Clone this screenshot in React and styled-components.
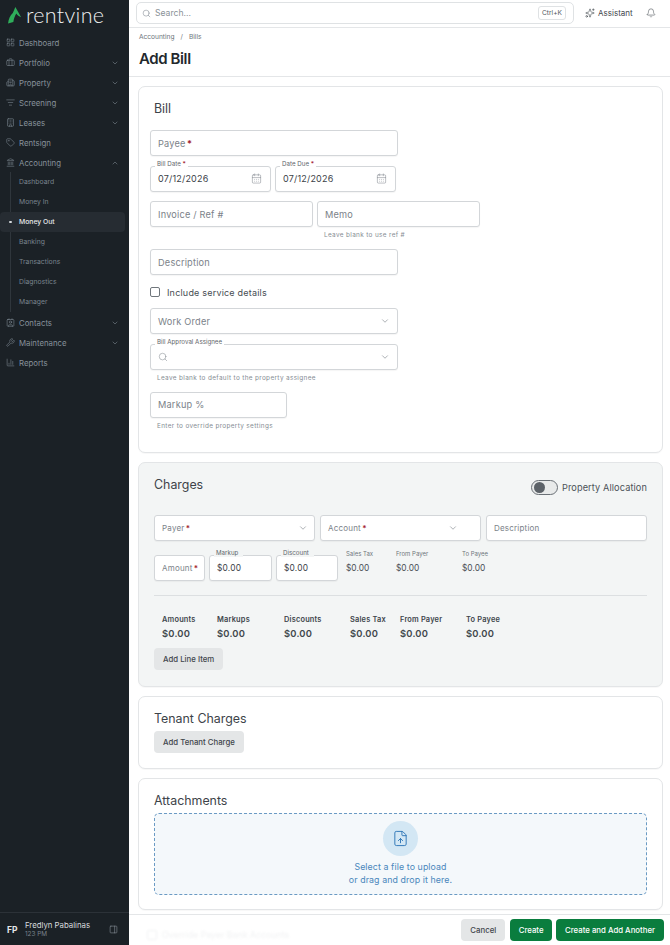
import React from 'react';
import styled, { createGlobalStyle } from 'styled-components';
import {
	LayoutGrid, Briefcase, Building2, ListFilter, Building, Tag, Landmark, Contact, Wrench,
	ChartColumn, ChevronDown, ChevronUp, Search, Bell, CalendarDays, FileUp, PanelRight, Sparkles
} from 'lucide-react';

const GlobalStyle = createGlobalStyle`
	* { box-sizing: border-box; }
	html, body { margin: 0; height: 100%; }
	body {
		font-family: Inter, "Liberation Sans", sans-serif;
		background: #fff;
		overflow: hidden;
	}
`;

const Shell = styled.div`
	display: grid;
	grid-template-columns: 129px 541px;
	width: 670px;
	height: 945px;
	overflow: hidden;
`;

/* sidebar */
const Sidebar = styled.aside`
	display: flex;
	flex-direction: column;
	background: #1b2126;
	height: 945px;
`;

const Brand = styled.div`
	display: flex;
	align-items: center;
	gap: 4px;
	height: 32.5px;
	padding: 0 0 3px 7px;
	color: #eef0f1;
	font-family: Lato, sans-serif;
	font-size: 21.5px;
	font-weight: 300;
	letter-spacing: 0.3px;
`;

const Nav = styled.nav`
	display: flex;
	flex-direction: column;
	flex: 1;
`;

const NavItem = styled.div`
	display: flex;
	align-items: center;
	height: 20px;
	padding: 0 10px 0 6px;
	color: #87919b;
	font-size: 7.8px;
	gap: 4px;
	span { flex: 1; }
`;

const SubNav = styled.div`
	position: relative;
	display: flex;
	flex-direction: column;
	margin: -1px 0 1px;
	&::before {
		content: '';
		position: absolute;
		left: 10px;
		top: 0;
		bottom: 0;
		width: 1px;
		background: #2f363c;
	}
`;

const SubItem = styled.div`
	position: relative;
	display: flex;
	align-items: center;
	height: 20px;
	margin-right: 4px;
	padding-left: 19px;
	border-radius: 4px;
	font-size: 6.8px;
	color: ${(p) => (p.$active ? '#e6e9eb' : '#79838d')};
	font-weight: ${(p) => (p.$active ? 500 : 400)};
	background: ${(p) => (p.$active ? '#262c32' : 'transparent')};
	${(p) => p.$active && `
		&::before {
			content: '';
			position: absolute;
			left: 9px;
			top: 9px;
			width: 2.5px;
			height: 2.5px;
			border-radius: 50%;
			background: #d5d9dc;
		}
	`}
`;

const UserBar = styled.div`
	display: flex;
	align-items: center;
	height: 33px;
	padding: 1px 11px 0 7px;
	border-top: 1px solid #2c3238;
	color: #8d959d;
`;

const Avatar = styled.div`
	width: 13px;
	font-size: 8.5px;
	font-weight: 700;
	color: #e4e7e9;
	margin-right: 5px;
`;

const UserText = styled.div`
	flex: 1;
	display: flex;
	flex-direction: column;
	font-size: 7.8px;
	line-height: 9.5px;
	color: #d9dcdf;
	small { font-size: 6.4px; color: #7a838c; line-height: 8px; }
`;

/* main column */
const Main = styled.main`
	display: flex;
	flex-direction: column;
	height: 945px;
	min-width: 0;
`;

const TopBar = styled.header`
	display: flex;
	align-items: center;
	height: 28px;
	flex: none;
	padding: 0 14px 1px 7px;
	border-bottom: 1px solid #e4e6e8;
`;

const SearchBox = styled.div`
	display: flex;
	align-items: center;
	gap: 4px;
	width: 438px;
	height: 22px;
	padding: 0 7px 0 5px;
	border: 1px solid #dfe2e4;
	border-radius: 5px;
	color: #8a9198;
	font-size: 8.6px;
	span { flex: 1; }
`;

const Kbd = styled.kbd`
	font-family: inherit;
	font-size: 6.6px;
	color: #50575e;
	padding: 2px 3px;
	border: 1px solid #dfe2e4;
	border-radius: 3px;
`;

const Assistant = styled.div`
	display: flex;
	align-items: center;
	gap: 3px;
	margin-left: 11px;
	font-size: 8px;
	color: #3f464c;
`;

const BellWrap = styled.div`
	display: flex;
	margin-left: auto;
	color: #4a5157;
`;

const PageHead = styled.div`
	flex: none;
	height: 49px;
	padding: 5px 0 0 10px;
	border-bottom: 1px solid #e4e6e8;
`;

const Crumbs = styled.div`
	display: flex;
	gap: 6px;
	font-size: 6.6px;
	line-height: 9px;
	color: #6d747b;
`;

const Title = styled.h1`
	margin: 7px 0 0;
	font-size: 15px;
	line-height: 20px;
	font-weight: 600;
	letter-spacing: -0.4px;
	color: #23282d;
`;

const Content = styled.div`
	flex: 1;
	display: flex;
	flex-direction: column;
	gap: 9px;
	padding: 9px 7px 0 9px;
	overflow: hidden;
`;

const Card = styled.section`
	flex: none;
	height: ${(p) => p.$height}px;
	padding: ${(p) => p.$top}px 15px 0 ${(p) => p.$left}px;
	background: ${(p) => (p.$muted ? '#f3f5f5' : '#fff')};
	border: 1px solid #e3e5e7;
	border-radius: 7px;
	box-shadow: 0 1px 1px rgba(0, 0, 0, 0.03);
`;

const Heading = styled.h2`
	margin: 0;
	padding-left: ${(p) => p.$indent || 0}px;
	font-size: 12.4px;
	line-height: 18px;
	font-weight: 400;
	color: #3d4349;
`;

const Stack = styled.div`
	display: flex;
	flex-direction: column;
	gap: 9.5px;
	margin-top: 12px;
`;

const Row = styled.div`
	display: flex;
	align-items: flex-start;
	gap: ${(p) => p.$gap || 4}px;
	margin-top: ${(p) => p.$top || 0}px;
`;

const FieldWrap = styled.div`
	position: relative;
	flex: none;
	width: ${(p) => p.$w}px;
`;

const Box = styled.div`
	display: flex;
	align-items: center;
	height: 26px;
	padding: 0 ${(p) => p.$right || 7}px 0 7px;
	background: #fff;
	border: 1px solid #d3d6d9;
	border-radius: 3px;
	box-shadow: 0 1px 1px rgba(0, 0, 0, 0.04);
	font-size: ${(p) => p.$size || 9.2}px;
	letter-spacing: 0.2px;
	color: ${(p) => (p.$value ? '#3c4248' : '#7b8289')};
	span { flex: 1; white-space: nowrap; }
	svg { flex: none; color: #7b8289; }
	b { margin-left: -1px; color: #a3212e; font-weight: 600; }
`;

const FloatLabel = styled.label`
	position: absolute;
	left: 5px;
	top: -6px;
	padding: 0 ${(p) => p.$tail || 2}px 0 2px;
	font-size: 6.2px;
	line-height: 8px;
	color: #5f666c;
	background: ${(p) => p.$bg || '#fff'};
	white-space: nowrap;
	b { color: #a3212e; font-weight: 600; }
`;

const Help = styled.div`
	height: 12.5px;
	padding: 4px 0 0 7px;
	font-size: 6.4px;
	line-height: 8px;
	letter-spacing: 0.35px;
	color: #868d94;
	white-space: nowrap;
`;

const CheckRow = styled.label`
	display: flex;
	align-items: center;
	gap: 7px;
	height: 14px;
	padding-top: 1px;
	font-size: 9px;
	letter-spacing: 0.2px;
	color: #464c52;
`;

const CheckBox = styled.i`
	display: block;
	width: 10px;
	height: 10px;
	background: #fff;
	border: 1px solid #70767c;
	border-radius: 2px;
`;

const ChargesHead = styled.div`
	display: flex;
	align-items: center;
	justify-content: space-between;
	height: 18px;
	margin-top: 2px;
`;

const ToggleWrap = styled.div`
	display: flex;
	align-items: center;
	gap: 4px;
	padding-top: 4px;
	font-size: 9.2px;
	letter-spacing: 0.1px;
	color: #4c5258;
`;

const Track = styled.div`
	display: flex;
	align-items: center;
	width: 27px;
	height: 15px;
	padding-left: 2px;
	background: #e8eaea;
	border: 1px solid #6a7076;
	border-radius: 8px;
`;

const Knob = styled.div`
	width: 11px;
	height: 11px;
	border-radius: 50%;
	background: #5c6268;
`;

const StatCol = styled.div`
	flex: none;
	width: ${(p) => p.$w}px;
	margin-top: -5px;
	padding-left: ${(p) => p.$pad || 0}px;
	font-size: 8.4px;
	line-height: 12px;
	color: #4b5157;
	small {
		display: block;
		margin: 0 0 5px;
		font-size: 6px;
		line-height: 7px;
		color: #6f767c;
	}
`;

const Divider = styled.hr`
	margin: 14px 0 0;
	border: 0;
	border-top: 1px solid #dcdfe1;
`;

const Totals = styled.div`
	display: flex;
	margin-top: 19px;
	padding-left: 8px;
`;

const Total = styled.div`
	flex: none;
	width: ${(p) => p.$w}px;
	color: #40464c;
	strong { display: block; font-size: 7.4px; line-height: 10px; font-weight: 600; letter-spacing: 0.2px; }
	em { display: block; margin-top: 3px; font-style: normal; font-size: 9.4px; line-height: 12px; font-weight: 600; letter-spacing: 0.2px; }
`;

const Button = styled.button`
	display: inline-flex;
	align-items: center;
	justify-content: center;
	height: 22px;
	margin-top: ${(p) => p.$top || 0}px;
	padding: 0 ${(p) => p.$pad || 9}px;
	border: 0;
	border-radius: 4px;
	font-family: inherit;
	font-size: 7.8px;
	font-weight: 500;
	color: ${(p) => (p.$primary ? '#fff' : '#3f454b')};
	background: ${(p) => (p.$primary ? '#0a7d3e' : '#e4e6e7')};
`;

const DropZone = styled.div`
	display: flex;
	flex-direction: column;
	align-items: center;
	height: 82px;
	margin-top: 3px;
	padding-top: 7px;
	background: #f4f8fb;
	border: 1px dashed #6a9ac4;
	border-radius: 5px;
	color: #4a87bb;
	font-size: 8.8px;
	line-height: 13px;
	letter-spacing: 0.1px;
	text-align: center;
`;

const UploadCircle = styled.div`
	display: flex;
	align-items: center;
	justify-content: center;
	width: 35px;
	height: 35px;
	margin-bottom: 4px;
	border-radius: 50%;
	background: #d3e7f4;
	color: #2b73b5;
`;

const Footer = styled.footer`
	position: absolute;
	left: 129px;
	right: 0;
	bottom: 0;
	display: flex;
	align-items: center;
	gap: 4px;
	height: 31px;
	padding: 0 6px 0 0;
	background: #fff;
	border-top: 1px solid #e4e6e8;
`;

const Ghost = styled.div`
	flex: 1;
	display: flex;
	align-items: center;
	gap: 5px;
	padding: 9px 0 0 18px;
	font-size: 8.8px;
	color: #f1f2f3;
	filter: blur(0.8px);
`;

const GhostBox = styled.i`
	display: block;
	width: 10px;
	height: 10px;
	border: 1px solid #f1f2f3;
	border-radius: 2px;
`;

const CancelSlot = styled.div`
	display: flex;
	margin-right: 1px;
`;

const Logo = () => (
	<svg width="15" height="18" viewBox="0 0 17 20">
		<path d="M9.5 1 L16 12.5 C13.6 11.8 11.8 10.2 10.6 8.4 C9 11 7.6 14.4 7.2 18 L1.2 19.5 C1.6 14.6 3.6 10.4 6.6 7.6 Z" fill="#2fae5b" />
	</svg>
);

const navTop = [
	[LayoutGrid, 'Dashboard'],
	[Briefcase, 'Portfolio', true],
	[Building2, 'Property', true],
	[ListFilter, 'Screening', true],
	[Building, 'Leases', true],
	[Tag, 'Rentsign']
];

const navSub = ['Dashboard', 'Money In', 'Money Out', 'Banking', 'Transactions', 'Diagnostics', 'Manager'];

const navBottom = [
	[Contact, 'Contacts', true],
	[Wrench, 'Maintenance', true],
	[ChartColumn, 'Reports']
];

const NavLine = ({ icon: Icon, label, chevron, up }) => (
	<NavItem>
		<Icon size={9} strokeWidth={1.4} />
		<span>{label}</span>
		{chevron && (up ? <ChevronUp size={8} strokeWidth={1.6} /> : <ChevronDown size={8} strokeWidth={1.6} />)}
	</NavItem>
);

const Field = ({ w, label, required, value, float, floatBg, floatTail, help, size, right, trailing, chevron }) => (
	<FieldWrap $w={w}>
		{float && <FloatLabel $bg={floatBg} $tail={floatTail}>{float}</FloatLabel>}
		<Box $value={value} $size={size} $right={right}>
			<span>{value || label}{required && <b> *</b>}</span>
			{trailing}
			{chevron && <ChevronDown size={10} strokeWidth={1.5} />}
		</Box>
		{help && <Help>{help}</Help>}
	</FieldWrap>
);

const Calendar = <CalendarDays size={11} strokeWidth={1.1} />;

const App = () => (
	<Shell>
		<GlobalStyle />
		<Sidebar>
			<Brand><Logo />rentvine</Brand>
			<Nav>
				{navTop.map(([icon, label, chevron]) => (
					<NavLine key={label} icon={icon} label={label} chevron={chevron} />
				))}
				<NavLine icon={Landmark} label="Accounting" chevron up />
				<SubNav>
					{navSub.map((label) => (
						<SubItem key={label} $active={label === 'Money Out'}>{label}</SubItem>
					))}
				</SubNav>
				{navBottom.map(([icon, label, chevron]) => (
					<NavLine key={label} icon={icon} label={label} chevron={chevron} />
				))}
			</Nav>
			<UserBar>
				<Avatar>FP</Avatar>
				<UserText>Fredlyn Pabalinas<small>123 PM</small></UserText>
				<PanelRight size={9} strokeWidth={1.5} />
			</UserBar>
		</Sidebar>
		<Main>
			<TopBar>
				<SearchBox>
					<Search size={9} strokeWidth={1.6} />
					<span>Search...</span>
					<Kbd>Ctrl+K</Kbd>
				</SearchBox>
				<Assistant><Sparkles size={10} strokeWidth={1.4} /> Assistant</Assistant>
				<BellWrap><Bell size={10} strokeWidth={1.4} /></BellWrap>
			</TopBar>
			<PageHead>
				<Crumbs><span>Accounting</span><span>/</span><span>Bills</span></Crumbs>
				<Title>Add Bill</Title>
			</PageHead>
			<Content>
				<Card $height={367} $top={13} $left={11}>
					<Heading $indent={4}>Bill</Heading>
					<Stack>
						<Field w={248} label="Payee" required />
						<Row>
							<Field w={121} value="07/12/2026" float={<>Bill Date <b>*</b></>} size={9} right={8} trailing={Calendar} />
							<Field w={121} value="07/12/2026" float={<>Date Due <b>*</b></>} size={9} right={8} trailing={Calendar} />
						</Row>
						<Row>
							<Field w={163} label="Invoice / Ref #" />
							<Field w={163} label="Memo" help="Leave blank to use ref #" />
						</Row>
						<Field w={248} label="Description" />
						<CheckRow><CheckBox />Include service details</CheckRow>
						<Field w={248} label="Work Order" chevron />
						<FieldWrap $w={248}>
							<FloatLabel>Bill Approval Assignee</FloatLabel>
							<Box><Search size={10} strokeWidth={1.2} /><span /><ChevronDown size={10} strokeWidth={1.5} /></Box>
							<Help>Leave blank to default to the property assignee</Help>
						</FieldWrap>
						<Field w={137} label="Markup %" help="Enter to override property settings" />
					</Stack>
				</Card>
				<Card $muted $height={225} $top={11} $left={15}>
					<ChargesHead>
						<Heading>Charges</Heading>
						<ToggleWrap><Track><Knob /></Track>Property Allocation</ToggleWrap>
					</ChargesHead>
					<Row $gap={5} $top={21}>
						<Field w={161} label="Payer" required size={8} right={6} chevron />
						<Field w={161} label="Account" required size={8} right={22} chevron />
						<Field w={161} label="Description" size={8} />
					</Row>
					<Row $top={14}>
						<Field w={51} label="Amount" required size={8} />
						<Field w={63} value="$0.00" float="Markup" floatBg="#f3f5f5" floatTail={5} size={8.4} />
						<Field w={62} value="$0.00" float="Discount" floatBg="#f3f5f5" floatTail={5} size={8.4} />
						<StatCol $w={50} $pad={4}><small>Sales Tax</small>$0.00</StatCol>
						<StatCol $w={62}><small>From Payer</small>$0.00</StatCol>
						<StatCol $w={60}><small>To Payee</small>$0.00</StatCol>
					</Row>
					<Divider />
					<Totals>
						<Total $w={55}><strong>Amounts</strong><em>$0.00</em></Total>
						<Total $w={67}><strong>Markups</strong><em>$0.00</em></Total>
						<Total $w={66}><strong>Discounts</strong><em>$0.00</em></Total>
						<Total $w={50}><strong>Sales Tax</strong><em>$0.00</em></Total>
						<Total $w={66}><strong>From Payer</strong><em>$0.00</em></Total>
						<Total $w={60}><strong>To Payee</strong><em>$0.00</em></Total>
					</Totals>
					<Button $top={8}>Add Line Item</Button>
				</Card>
				<Card $height={73} $top={13} $left={15}>
					<Heading>Tenant Charges</Heading>
					<Button $pad={9} $top={3}>Add Tenant Charge</Button>
				</Card>
				<Card $height={132} $top={13} $left={15}>
					<Heading>Attachments</Heading>
					<DropZone>
						<UploadCircle><FileUp size={17} strokeWidth={1.3} /></UploadCircle>
						<div>Select a file to upload</div>
						<div>or drag and drop it here.</div>
					</DropZone>
				</Card>
			</Content>
		</Main>
		<Footer>
			<Ghost><GhostBox />Override Payer Bank Accounts</Ghost>
			<CancelSlot><Button $pad={9}>Cancel</Button></CancelSlot>
			<Button $primary $pad={8.5}>Create</Button>
			<Button $primary $pad={9}>Create and Add Another</Button>
		</Footer>
	</Shell>
);

export default App;
